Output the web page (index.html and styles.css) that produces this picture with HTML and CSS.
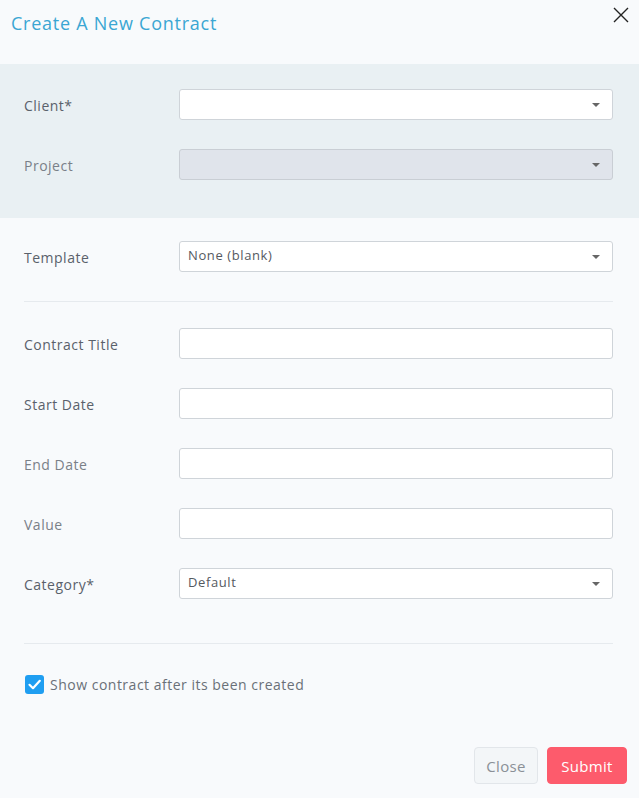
FILE: index.html
```html
<!DOCTYPE html>
<html>
<head>
<meta charset="utf-8">
<link rel="stylesheet" href="styles.css">
</head>
<body>
<div class="modal">
  <div class="modal-header">
    <h1 class="modal-title">Create A New Contract</h1>
    <button class="close-x" aria-label="Close">
      <svg width="16" height="16" viewBox="0 0 16 16"><path d="M1 1 L15 15 M15 1 L1 15" stroke="#222" stroke-width="1.4" fill="none"/></svg>
    </button>
  </div>

  <div class="section-gray">
    <div class="form-grid">
      <label class="lbl strong">Client*</label>
      <div class="select"><span class="select-text"></span><span class="caret"></span></div>
      <label class="lbl">Project</label>
      <div class="select disabled"><span class="select-text"></span><span class="caret"></span></div>
    </div>
  </div>

  <div class="section">
    <div class="form-grid">
      <label class="lbl strong">Template</label>
      <div class="select"><span class="select-text">None (blank)</span><span class="caret"></span></div>
    </div>
    <hr class="divider">
    <div class="form-grid second">
      <label class="lbl strong">Contract Title</label>
      <div class="input"></div>
      <label class="lbl strong">Start Date</label>
      <div class="input"></div>
      <label class="lbl">End Date</label>
      <div class="input"></div>
      <label class="lbl">Value</label>
      <div class="input"></div>
      <label class="lbl strong">Category*</label>
      <div class="select"><span class="select-text">Default</span><span class="caret"></span></div>
    </div>
    <hr class="divider bottom">
    <div class="check-row">
      <span class="checkbox">
        <svg width="19" height="19" viewBox="0 0 19 19"><path d="M4.5 9.8 L8 13.2 L14.8 5.8" stroke="#fff" stroke-width="2.2" fill="none" stroke-linecap="round" stroke-linejoin="round"/></svg>
      </span>
      <span class="check-label">Show contract after its been created</span>
    </div>
  </div>

  <div class="footer">
    <button class="btn btn-close">Close</button>
    <button class="btn btn-submit">Submit</button>
  </div>
</div>
</body>
</html>
```

FILE: styles.css
```css
html, body {
  margin: 0;
  padding: 0;
  background: #f8fafc;
}
body {
  font-family: "Open Sans", "Noto Sans", sans-serif;
  color: #5f6670;
  width: 639px;
  height: 798px;
  overflow: hidden;
}
.modal {
  display: flex;
  flex-direction: column;
  height: 798px;
}
.modal-header {
  height: 64px;
  box-sizing: border-box;
  display: flex;
  justify-content: space-between;
  align-items: flex-start;
  padding: 11px 10px 0 11px;
}
.modal-title {
  margin: 0;
  font-size: 18px;
  font-weight: 400;
  color: #3aa6d3;
  line-height: 24px;
  letter-spacing: 0.75px;
}
.close-x {
  border: 0;
  background: transparent;
  padding: 0;
  margin-top: -4px;
  cursor: pointer;
  width: 16px;
  height: 16px;
}
.section-gray {
  background: #e9f0f3;
  padding: 25px 26px 38px 24px;
}
.section {
  padding: 23px 26px 0 24px;
}
.form-grid {
  display: grid;
  grid-template-columns: 155px 1fr;
  row-gap: 29px;
  align-items: center;
}
.lbl {
  font-size: 14px;
  color: #7a8088;
  letter-spacing: 0.5px;
  padding-top: 2px;
}
.lbl.strong {
  color: #5a616b;
  font-weight: 500;
}
.select, .input {
  height: 31px;
  box-sizing: border-box;
  background: #fff;
  border: 1px solid #cfd4d9;
  border-radius: 3px;
  display: flex;
  align-items: center;
  justify-content: space-between;
  padding: 0 12px 0 8px;
}
.select.disabled {
  background: #e0e4eb;
  border-color: #c9ced4;
}
.select-text {
  font-size: 13px;
  color: #55595f;
  margin-top: -3px;
  letter-spacing: 0.6px;
}
.caret {
  width: 0;
  height: 0;
  border-left: 4px solid transparent;
  border-right: 4px solid transparent;
  border-top: 4px solid #666;
}
.divider {
  border: 0;
  border-top: 1px solid #e6eaee;
  margin: 29px 0 26px 0;
}
.divider.bottom {
  margin: 44px 0 31px 0;
}
.check-row {
  display: flex;
  align-items: center;
  gap: 6px;
  padding-left: 1px;
}
.checkbox {
  width: 19px;
  height: 19px;
  border-radius: 3px;
  background: #1f9ef1;
  display: flex;
}
.check-label {
  font-size: 14px;
  color: #6a7078;
  letter-spacing: 0.5px;
}
.footer {
  margin-top: auto;
  display: flex;
  justify-content: flex-end;
  gap: 9px;
  padding: 0 12px 14px 0;
}
.btn {
  height: 37px;
  border-radius: 4px;
  font-family: inherit;
  font-size: 15px;
  cursor: pointer;
  padding: 0;
  letter-spacing: 0.3px;
}
.btn-close {
  width: 64px;
  background: #f3f6f8;
  border: 1px solid #e2e6ea;
  color: #8a9097;
}
.btn-submit {
  width: 80px;
  background: #fd5b6c;
  border: 1px solid #fd5b6c;
  color: #fff;
}
```
